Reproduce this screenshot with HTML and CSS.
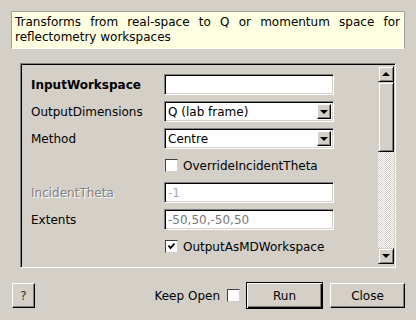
FILE: index.html
```html
<!DOCTYPE html>
<html lang="en">
<head>
    <meta charset="UTF-8">
    <meta name="viewport" content="width=device-width, initial-scale=1.0">
    <title>ConvertToReflectometryQ</title>
    <link rel="stylesheet" href="styles.css">
</head>
<body>
    <div class="dialog">
        <div class="description">Transforms from real-space to Q or momentum space for reflectometry workspaces</div>

        <div class="props-frame">
            <div class="props">
                <div class="row">
                    <span class="label bold">InputWorkspace</span>
                    <div class="field"></div>
                </div>
                <div class="row">
                    <span class="label">OutputDimensions</span>
                    <div class="field combo"><span class="value">Q (lab frame)</span><span class="drop"><span class="arrow-down"></span></span></div>
                </div>
                <div class="row">
                    <span class="label">Method</span>
                    <div class="field combo"><span class="value">Centre</span><span class="drop"><span class="arrow-down"></span></span></div>
                </div>
                <div class="row">
                    <span class="label"></span>
                    <span class="check"></span><span class="check-text">OverrideIncidentTheta</span>
                </div>
                <div class="row">
                    <span class="label disabled">IncidentTheta</span>
                    <div class="field"><span class="value faint">-1</span></div>
                </div>
                <div class="row">
                    <span class="label">Extents</span>
                    <div class="field"><span class="value muted">-50,50,-50,50</span></div>
                </div>
                <div class="row">
                    <span class="label"></span>
                    <span class="check">
                        <svg width="9" height="9" viewBox="0 0 9 9"><polyline points="1.5,3.5 3.5,6 7.5,1.5" fill="none" stroke="#000" stroke-width="1.8"/></svg>
                    </span><span class="check-text">OutputAsMDWorkspace</span>
                </div>
                <div class="row">
                    <span class="label"></span>
                    <span class="gap-field"></span>
                    <span class="small-btn"></span>
                </div>
            </div>
            <div class="scrollbar">
                <div class="sb-btn"><span class="arrow-up"></span></div>
                <div class="sb-thumb"></div>
                <div class="sb-trough"></div>
                <div class="sb-btn"><span class="arrow-down"></span></div>
            </div>
        </div>

        <div class="buttons">
            <button class="btn help">?</button>
            <span class="spacer"></span>
            <span class="keep-open">Keep Open</span>
            <span class="check"></span>
            <button class="btn run">Run</button>
            <button class="btn close">Close</button>
        </div>
    </div>
</body>
</html>
```

FILE: styles.css
```css
body {
    margin: 0;
    background-color: #d4d0c8;
    font-family: "DejaVu Sans", sans-serif;
    font-size: 12px;
    color: #000;
}

.dialog {
    width: 416px;
    height: 320px;
    box-sizing: border-box;
    padding: 11px 11px 0 11px;
    display: flex;
    flex-direction: column;
}

.description {
    background-color: #ffffe1;
    border: 1px solid #a0a0a0;
    border-bottom-color: #ffffff;
    padding: 3px 4px 3px 3px;
    line-height: 15px;
    text-align: justify;
    height: 30px;
}

/* sunken frame around the property list */
.props-frame {
    margin: 14px 9px 0 9px;
    height: 205px;
    box-sizing: border-box;
    border: 1px solid;
    border-color: #808080 #ffffff #ffffff #808080;
    box-shadow: inset 1px 1px #000000, inset -1px -1px #d4d0c8;
    padding: 1px;
    display: flex;
}

.props {
    flex: 1;
    overflow: hidden;
    padding: 9px 0 0 9px;
    display: flex;
    flex-direction: column;
    gap: 6px;
}

.row {
    display: flex;
    align-items: center;
    height: 21px;
    flex: none;
}

.label {
    width: 133px;
    flex: none;
}

.bold {
    font-weight: bold;
}

.disabled {
    color: #808080;
    text-shadow: 1px 1px #ffffff;
}

.field {
    width: 170px;
    height: 21px;
    box-sizing: border-box;
    background-color: #ffffff;
    border: 1px solid;
    border-color: #808080 #ffffff #ffffff #808080;
    box-shadow: inset 1px 1px #000000, inset -1px -1px #d4d0c8;
    display: flex;
    align-items: center;
    padding: 0 2px 0 3px;
}

.value {
    flex: 1;
    white-space: nowrap;
}

.faint {
    color: #a8a8a8;
}

.muted {
    color: #777777;
}

.drop {
    width: 14px;
    height: 15px;
    box-sizing: border-box;
    background-color: #d4d0c8;
    border: 1px solid;
    border-color: #ffffff #000000 #000000 #ffffff;
    box-shadow: inset -1px -1px #808080;
    display: flex;
    align-items: center;
    justify-content: center;
}

.arrow-down {
    width: 0;
    height: 0;
    border-left: 4px solid transparent;
    border-right: 4px solid transparent;
    border-top: 4px solid #000;
}

.arrow-up {
    width: 0;
    height: 0;
    border-left: 4px solid transparent;
    border-right: 4px solid transparent;
    border-bottom: 4px solid #000;
}

.check {
    width: 13px;
    height: 13px;
    box-sizing: border-box;
    flex: none;
    background-color: #ffffff;
    border: 1px solid;
    border-color: #404040 #d4d0c8 #d4d0c8 #404040;
    display: flex;
    align-items: center;
    justify-content: center;
    margin-left: 1px;
}

.check-text {
    margin-left: 5px;
}

.gap-field {
    width: 179px;
    flex: none;
}

.small-btn {
    width: 30px;
    height: 21px;
    align-self: flex-end;
    margin-bottom: -16px;
    box-sizing: border-box;
    border: 1px solid;
    border-color: #ffffff #000000 #000000 #ffffff;
}

.scrollbar {
    width: 16px;
    flex: none;
    display: flex;
    flex-direction: column;
    padding: 1px 0 2px 0;
}

.sb-btn {
    height: 16px;
    flex: none;
    box-sizing: border-box;
    background-color: #d4d0c8;
    border: 1px solid;
    border-color: #d4d0c8 #000000 #000000 #d4d0c8;
    box-shadow: inset 1px 1px #ffffff, inset -1px -1px #808080;
    display: flex;
    align-items: center;
    justify-content: center;
}

.sb-thumb {
    height: 70px;
    flex: none;
    box-sizing: border-box;
    background-color: #d4d0c8;
    border: 1px solid;
    border-color: #d4d0c8 #000000 #000000 #d4d0c8;
    box-shadow: inset 1px 1px #ffffff, inset -1px -1px #808080;
}

.sb-trough {
    flex: 1;
    background: repeating-conic-gradient(#ffffff 0 25%, #d4d0c8 0 50%) 0 0 / 2px 2px;
}

.buttons {
    margin-top: 14px;
    display: flex;
    align-items: center;
    padding: 0 0 0 1px;
    height: 27px;
}

.spacer {
    flex: 1;
}

.btn {
    font-family: "DejaVu Sans", sans-serif;
    font-size: 12px;
    color: #000;
    background-color: #d4d0c8;
    border: 1px solid;
    border-color: #ffffff #000000 #000000 #ffffff;
    box-shadow: inset -1px -1px #808080;
    padding: 0;
    height: 25px;
}

.help {
    width: 23px;
    color: #303030;
}

.keep-open {
    margin-right: 6px;
}

.run {
    width: 77px;
    height: 27px;
    margin-left: 6px;
    border-color: #000000;
    box-shadow: inset 1px 1px #ffffff, inset -1px -1px #000000, inset -2px -2px #808080;
}

.close {
    width: 75px;
    margin-left: 7px;
}
```
